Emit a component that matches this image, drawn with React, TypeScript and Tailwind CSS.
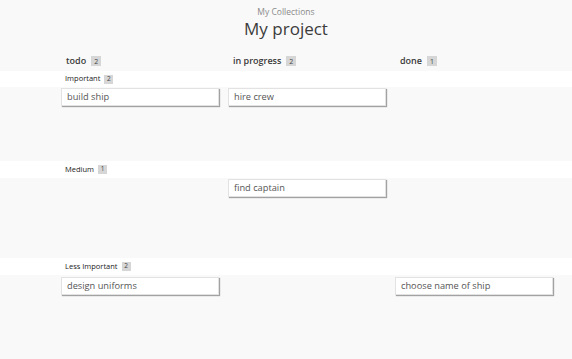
import React from "react";

type Card = { col: number; text: string };
type Lane = { name: string; count: number; cards: Card[]; h: string; bandH: string; pt: string };

const lanes: Lane[] = [
  { name: "Important", count: 2, cards: [{ col: 0, text: "build ship" }, { col: 1, text: "hire crew" }], h: "h-[74px]", bandH: "h-[16px]", pt: "pt-[1px]" },
  { name: "Medium", count: 1, cards: [{ col: 1, text: "find captain" }], h: "h-[80px]", bandH: "h-[17px]", pt: "pt-[1px]" },
  { name: "Less Important", count: 2, cards: [{ col: 0, text: "design uniforms" }, { col: 2, text: "choose name of ship" }], h: "h-[83px]", bandH: "h-[17px]", pt: "pt-[2px]" },
];

const cols = [
  { name: "todo", count: 2 },
  { name: "in progress", count: 2 },
  { name: "done", count: 1 },
];

function Badge({ n, small }: { n: number; small?: boolean }) {
  return (
    <span
      className={
        small
          ? "ml-[4px] inline-flex h-[9px] min-w-[9px] items-center justify-center bg-[#d6d6d6] px-[2px] text-[6.5px] font-normal leading-none text-[#444]"
          : "ml-[5px] inline-flex h-[10px] min-w-[10px] items-center justify-center bg-[#d6d6d6] px-[2px] text-[7px] font-normal leading-none text-[#444]"
      }
    >
      {n}
    </span>
  );
}

export default function App() {
  return (
    <div
      className="min-h-[359px] w-[572px] bg-[#f9f9f9] text-[#333]"
      style={{ fontFamily: '"Open Sans", "Noto Sans", sans-serif' }}
    >
      <div className="flex flex-col items-center pt-[6px]">
        <div className="text-[8.5px] leading-[12px] text-[#8a8a8a]">My Collections</div>
        <div className="mt-[-1px] text-[17px] leading-[24px] text-[#3c3c3c]">My project</div>
      </div>
      <div className="mt-[14px] grid grid-cols-[158px_158px_158px] gap-x-[9px] pl-[61px]">
        {cols.map((c) => (
          <div key={c.name} className="flex items-center pl-[5px] text-[9px] font-semibold leading-[12px] text-[#3a3a3a]">
            {c.name}
            <Badge n={c.count} />
          </div>
        ))}
      </div>
      <div className="mt-[4px]">
        {lanes.map((lane) => (
          <div key={lane.name}>
            <div className={`flex ${lane.bandH} items-center bg-white pl-[65px] text-[7.5px] font-medium text-[#222]`}>
              {lane.name}
              <Badge n={lane.count} small />
            </div>
            <div className={`grid grid-cols-[158px_158px_158px] gap-x-[9px] pl-[61px] ${lane.pt} ${lane.h}`}>
              {[0, 1, 2].map((ci) => (
                <div key={ci}>
                  {lane.cards
                    .filter((c) => c.col === ci)
                    .map((c) => (
                      <div
                        key={c.text}
                        className="flex h-[18px] items-center border border-[#e2e2e2] bg-white pl-[5px] text-[9.25px] text-[#555] shadow-[1px_1px_1px_rgba(0,0,0,0.35)]"
                      >
                        {c.text}
                      </div>
                    ))}
                </div>
              ))}
            </div>
          </div>
        ))}
      </div>
    </div>
  );
}
